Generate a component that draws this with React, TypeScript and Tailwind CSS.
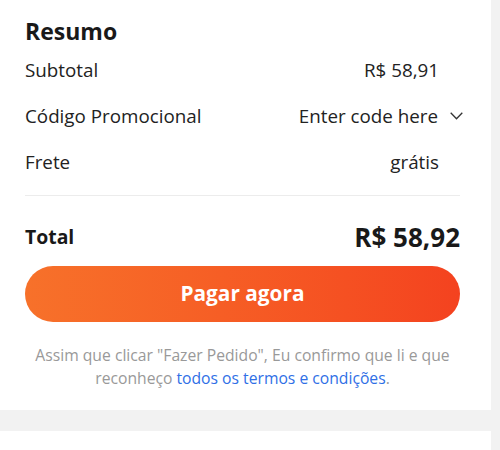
export default function App() {
  return (
    <div className="flex h-[450px] w-[500px] flex-col bg-[#f2f2f2] font-['Open_Sans',sans-serif] text-[#222]">
      <div className="w-[491px] bg-white pb-[20px] pl-[25px] pr-[31px] pt-[15px]">
        <h2 className="text-[23px] font-bold leading-[32px] text-[#191919]">Resumo</h2>

        <div className="flex h-[46px] items-center justify-between text-[18.8px]">
          <span>Subtotal</span>
          <span className="pr-[21px]">R$ 58,91</span>
        </div>
        <div className="flex h-[46px] items-center justify-between text-[18.8px]">
          <span>Código Promocional</span>
          <span className="-mr-[3px] flex items-center gap-[12px]">
            Enter code here
            <svg width="13" height="8" viewBox="0 0 13 8" fill="none" stroke="#333" strokeWidth="1.3">
              <polyline points="0.7,0.8 6.5,6.8 12.3,0.8" />
            </svg>
          </span>
        </div>
        <div className="flex h-[46px] items-center justify-between text-[18.8px]">
          <span>Frete</span>
          <span className="pr-[21px]">grátis</span>
        </div>

        <div className="mt-[10px] h-px bg-[#ececec]" />

        <div className="mt-[25px] flex items-center justify-between">
          <span className="text-[19.4px] font-bold text-[#191919]">Total</span>
          <span className="text-[26px] font-bold leading-[32px] text-[#191919]">R$ 58,92</span>
        </div>

        <button className="mt-[13px] flex h-[56px] w-full items-center justify-center rounded-full bg-gradient-to-r from-[#f7712a] to-[#f4421f] text-[20.8px] font-bold text-white">
          Pagar agora
        </button>

        <p className="mt-[22px] text-center text-[15.7px] leading-[23px] text-[#999]">
          Assim que clicar "Fazer Pedido", Eu confirmo que li e que
          <br />
          reconheço <span className="text-[#2f6fe6]">todos os termos e condições</span>.
        </p>
      </div>
      <div className="mt-[21px] w-[491px] flex-1 bg-white" />
    </div>
  );
}
